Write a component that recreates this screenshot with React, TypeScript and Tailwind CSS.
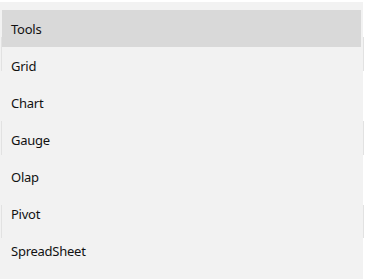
import React from "react";

const items = ["Tools", "Grid", "Chart", "Gauge", "Olap", "Pivot", "SpreadSheet"];

export default function App() {
  return (
    <div className="relative w-[367px] h-[279px] bg-white overflow-hidden" style={{ fontFamily: '"Noto Sans", "Open Sans", sans-serif' }}>
      <div className="mt-[2px] w-[363px] h-[277px] bg-[#f2f2f2] pt-[8px]">
        <ul className="flex flex-col">
          {items.map((it, i) => (
            <li
              key={it}
              className={`h-[37px] ml-[2px] mr-[2px] pl-[9px] pt-[2px] flex items-center text-[13px] tracking-[-0.25px] text-[#111111] ${i === 0 ? "bg-[#d9d9d9]" : ""}`}
            >
              {it}
            </li>
          ))}
        </ul>
      </div>
      <div className="absolute left-[1px] top-[37px] w-px h-[34px] bg-[#e2e2e2]" />
      <div className="absolute left-[1px] top-[121px] w-px h-[34px] bg-[#e2e2e2]" />
      <div className="absolute left-[1px] top-[205px] w-px h-[33px] bg-[#e2e2e2]" />
      <div className="absolute left-[363px] top-[37px] w-px h-[34px] bg-[#e2e2e2]" />
      <div className="absolute left-[363px] top-[121px] w-px h-[34px] bg-[#e2e2e2]" />
      <div className="absolute left-[363px] top-[205px] w-px h-[33px] bg-[#e2e2e2]" />
    </div>
  );
}
